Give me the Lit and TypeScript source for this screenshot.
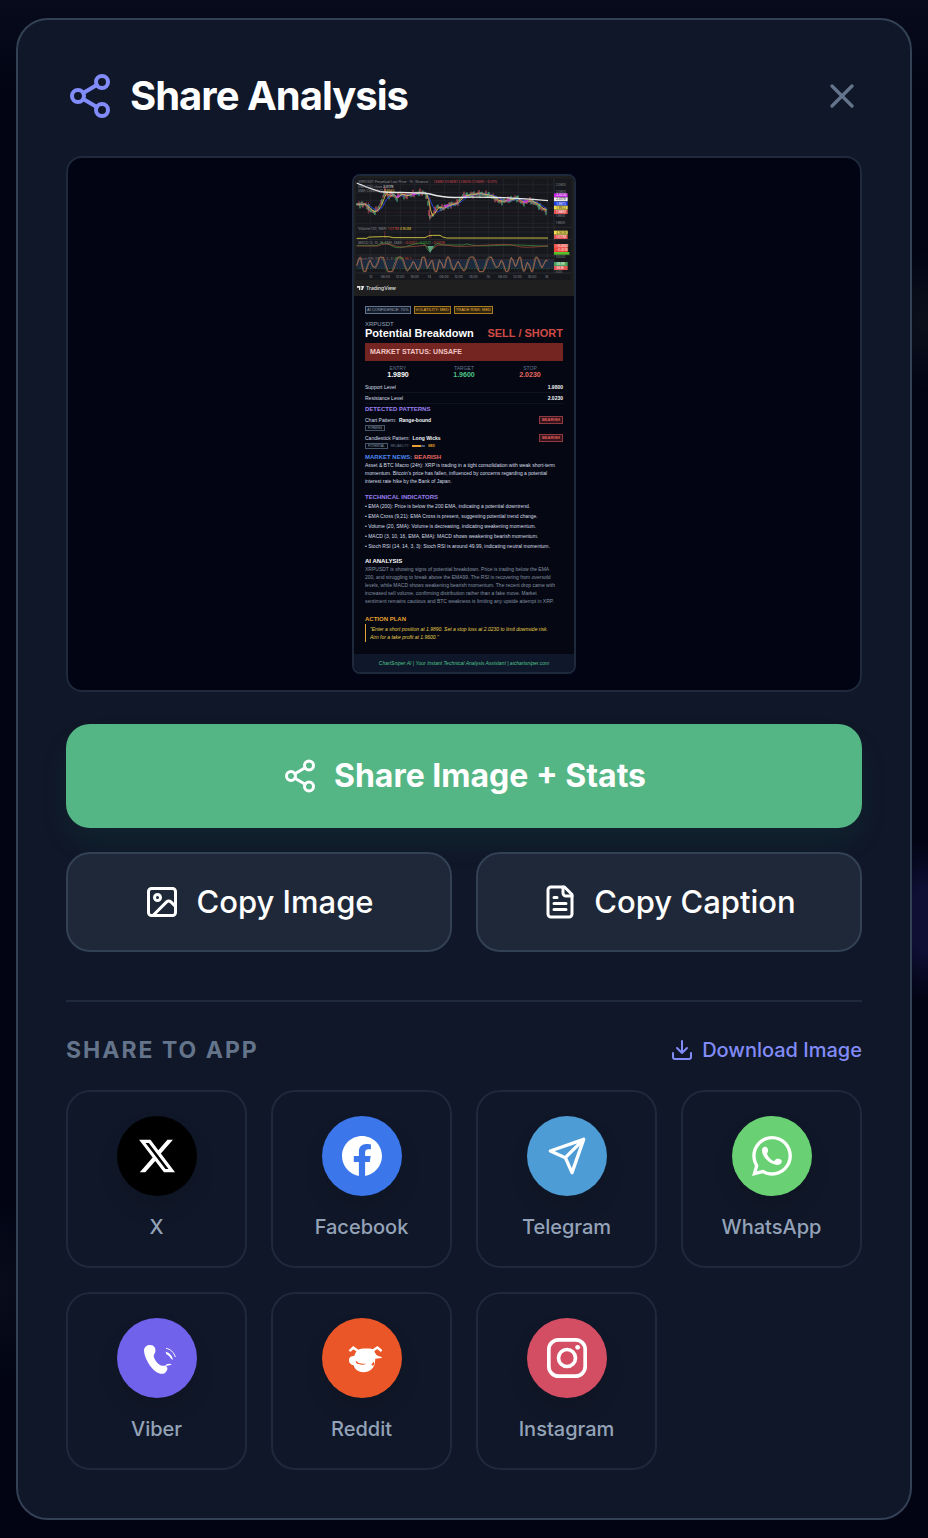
import { LitElement, html, css, svg } from "lit";
import { customElement } from "lit/decorators.js";

type Point = [number, number];

const PRICE: Point[] = [
  [20, 97], [45, 97], [55, 108], [70, 121], [85, 110], [98, 80], [105, 56], [115, 76], [125, 65],
  [140, 80], [150, 65], [165, 72], [180, 68], [210, 62], [226, 64], [233, 85], [239, 138], [250, 125],
  [262, 103], [275, 110], [300, 98], [320, 94], [338, 72], [365, 68], [385, 65], [410, 68], [430, 74],
  [445, 88], [470, 86], [500, 78], [515, 92], [540, 86], [560, 96], [575, 110], [592, 117],
];

const priceAt = (x: number): number => {
  for (let i = 1; i < PRICE.length; i++) {
    const [x0, y0] = PRICE[i - 1];
    const [x1, y1] = PRICE[i];
    if (x <= x1) return y0 + ((y1 - y0) * (x - x0)) / (x1 - x0);
  }
  return PRICE[PRICE.length - 1][1];
};

const noise = (i: number): number => Math.sin(i * 12.9898) * Math.cos(i * 4.137);

const candles = Array.from({ length: 190 }, (_, i) => {
  const x = 21 + i * 3;
  const y = priceAt(x) + noise(i) * 4;
  return { x, y, half: 3 + Math.abs(noise(i + 7)) * 7, up: noise(i + 3) > 0 };
});

const average = (lag: number): string =>
  Array.from({ length: 96 }, (_, i) => {
    const x = 20 + i * 6;
    let sum = 0;
    for (let k = 0; k < 6; k++) sum += priceAt(Math.max(20, x - (k * lag) / 6));
    return `${x},${(sum / 6).toFixed(1)}`;
  }).join(" ");

const oscillator = (phase: number): string =>
  Array.from({ length: 144 }, (_, i) => {
    const x = 20 + i * 4;
    const v = Math.sin(x / 5.3 + phase + Math.sin(x / 41) * 3) * 0.8 + Math.sin(x / 11 + phase) * 0.5 + noise(i) * 0.15;
    return `${x},${(277 - Math.max(-1, Math.min(1, v)) * 22).toFixed(1)}`;
  }).join(" ");

@customElement("price-chart")
class PriceChart extends LitElement {
  static styles = css`
    :host { display: block; }
    svg { display: block; width: 100%; height: auto; font-family: Inter, sans-serif; }
  `;

  tag(y: number, fill: string, label: string, dark = false) {
    return svg`<rect x="612" y=${y} width="41" height="12" fill=${fill}/>
      <text x="619" y=${y + 9} font-size="9" fill=${dark ? "#222" : "#fff"}>${label}</text>`;
  }

  render() {
    return html`<svg viewBox="12 12 660 360" role="img" aria-label="XRPUSDT price chart">
      <rect x="12" y="12" width="660" height="360" fill="#1f1f1f"/>
      <rect x="18" y="20" width="646" height="304" fill="#17181d"/>
      <g stroke="#2c2e34" stroke-width="1.5">
        ${[62, 106, 151, 195, 240, 284, 328, 372, 416, 460, 505, 549, 593].map((x) => svg`<line x1=${x} x2=${x} y1="20" y2="303"/>`)}
        ${[38, 62, 86, 108, 131, 154, 180, 216, 254].map((y) => svg`<line x1="20" x2="612" y1=${y} y2=${y}/>`)}
      </g>
      <g stroke="#3a3c42" stroke-width="1.5">
        <line x1="20" x2="664" y1="166" y2="166"/><line x1="20" x2="664" y1="203" y2="203"/>
        <line x1="20" x2="664" y1="249" y2="249"/><line x1="20" x2="664" y1="303" y2="303"/>
        <line x1="612" x2="612" y1="20" y2="303"/>
      </g>
      <line x1="20" x2="612" y1="121" y2="121" stroke="#7d2f3b" stroke-dasharray="3 3"/>
      <path d="M239 76V145M105 42V70M55 90V125" stroke="#b04a56" stroke-width="2"/>
      <g stroke-width="3">
        ${candles.map((c) => svg`<line x1=${c.x} x2=${c.x} y1=${c.y - c.half} y2=${c.y + c.half} stroke=${c.up ? "#5cc090" : "#dc5c68"}/>`)}
      </g>
      <polyline points=${average(30)} fill="none" stroke="#2747d9" stroke-width="3"/>
      <polyline points=${average(12)} fill="none" stroke="#e6c94a" stroke-width="2.5"/>
      <path d="M140 76l8-6M186 67l12-2M282 104l14-5M340 76l8-5M472 86l8-3M520 90l14-3" stroke="#c13bd0" stroke-width="6"/>
      <path d="M20 33C45 43 60 50 84 57S150 60 180 62S220 60 240 66S290 78 330 76S420 76 460 77S550 82 594 86" fill="none" stroke="#e6e6e6" stroke-width="4"/>
      <g font-size="10">
        <text x="25" y="34" fill="#8b8d93">XRPUSDT Perpetual Last Price · 15 · Binance</text>
        <text x="250" y="34" fill="#d04a56">1.9892 H1.9897 L1.9876 C1.9890 −0.01%</text>
        <text x="25" y="47" fill="#8b8d93">EMA 200 close <tspan fill="#e6e6e6">2.0179</tspan></text>
        <text x="25" y="59" fill="#8b8d93">EMA Cross 9 21 <tspan fill="#d6b944">1.9933</tspan></text>
        <text x="25" y="175" fill="#8b8d93">Volume (20, SMA) <tspan fill="#d6483c">1.077M</tspan> <tspan fill="#e6cf3c">4.163M</tspan></text>
        <text x="25" y="216" fill="#8b8d93">MACD (3, 10, 16, EMA, EMA) <tspan fill="#d6483c">−0.0002</tspan> <tspan fill="#3fae3f">−0.0021</tspan> <tspan fill="#d6483c">−0.0019</tspan></text>
        <text x="25" y="263" fill="#8b8d93">Stoch RSI (14, 14, 3, 3) <tspan fill="#3fae3f">49.99</tspan> <tspan fill="#d6483c">46.2</tspan></text>
      </g>
      <path d="M104 178V198M239 176V198M243 188V198" stroke="#7d2f3b" stroke-width="2"/>
      <path d="M20 199H50Q55 194 64 195L100 194Q120 193 130 197H225Q236 189 248 190H270Q276 196 290 198H594" fill="none" stroke="#c9bb3f" stroke-width="3"/>
      <path d="M20 221H80Q96 210 106 213T130 224T180 220T225 218L232 232L240 240L250 226L258 216Q266 212 276 219H340Q350 213 362 218T430 221T500 219T594 223" fill="none" stroke="#3f9c3f" stroke-width="2"/>
      <path d="M20 222H85Q100 214 112 216T140 223T225 220L236 226L248 231L262 220Q280 216 300 221T400 220T500 222T594 221" fill="none" stroke="#b0503c" stroke-width="2"/>
      <path d="M232 222H252L240 243Z" fill="#5aa07c"/>
      <rect x="20" y="262" width="592" height="28" fill="#1d2a3d"/>
      <path d="M20 262H612" stroke="#8a3c3c" stroke-width="1.5" stroke-dasharray="4 4"/>
      <path d="M20 290H612" stroke="#3f7c3f" stroke-width="1.5" stroke-dasharray="4 4"/>
      <polyline points=${oscillator(0.4)} fill="none" stroke="#68805c" stroke-width="2"/>
      <polyline points=${oscillator(0)} fill="none" stroke="#b3604a" stroke-width="2.5"/>
      <g font-size="9" fill="#8b8d93">
        <text x="617" y="41">2.0800</text><text x="617" y="62">2.0600</text>
        <text x="617" y="134">1.9800</text><text x="617" y="157">1.9600</text><text x="617" y="258">100.00</text>
        <text x="617" y="302">0.00</text>
      </g>
      ${this.tag(64, "#c32be0", "2.0230")}${this.tag(76, "#ececec", "2.0179", true)}
      ${this.tag(89, "#1c3ff0", "1.9973")}${this.tag(101, "#f0dc50", "1.9933", true)}${this.tag(114, "#e25555", "1.9890")}
      ${this.tag(176, "#f0dc50", "4.163M", true)}${this.tag(189, "#e25555", "1.077M")}
      ${this.tag(216, "#ee5a50", "−0.0002")}${this.tag(228, "#ee4438", "−0.0019")}
      <rect x="612" y="240" width="46" height="8" fill="#58c22e"/>
      ${this.tag(270, "#4aa35c", "49.99")}${this.tag(282, "#e25555", "46.18")}
      <g font-size="10" fill="#8b8d93" text-anchor="middle">
        ${["13", "06:00", "12:00", "18:00", "14", "06:00", "12:00", "18:00", "15", "06:00", "12:00", "18:00", "16"].map(
          (t, i) => svg`<text x=${62 + i * 44} y="318">${t}</text>`
        )}
      </g>
      <path d="M21 342H31V354H27V347H21ZM36 342H43L38 354H33Z" fill="#e4e4e4"/><circle cx="34" cy="344" r="2" fill="#e4e4e4"/>
      <text x="48" y="354" font-size="15" font-weight="500" fill="#e4e4e4">TradingView</text>
    </svg>`;
  }
}

@customElement("report-preview")
class ReportPreview extends LitElement {
  static styles = css`
    :host {
      display: block; box-sizing: border-box; width: 224px;
      border: 2px solid #1e293b; border-radius: 8px; overflow: hidden;
      background: #050812; color: #d5dde8;
      font: 5px/8px "Liberation Sans", Arial, sans-serif; white-space: nowrap;
    }
    p, h3, h4, ul, dl, dd, blockquote { margin: 0; padding: 0; }
    .body { padding: 10px 11px 12px; }
    .badges { display: flex; gap: 3px; margin-bottom: 7px; }
    .badge { border: 1px solid #64748b; color: #94a3b8; font-size: 4px; line-height: 6px; padding: 0 1px; background: #141c2b; }
    .badge.amber { border-color: #a97b22; color: #eab03a; background: #30240f; }
    .badge.red { border-color: #8f3a40; color: #e05c5c; background: #35151b; font-weight: bold; padding: 0 2px; }
    .symbol { font-size: 6px; line-height: 6px; color: #94a3b8; }
    .title { display: flex; justify-content: space-between; font-size: 11px; line-height: 12px; color: #fff; font-weight: bold; }
    .signal { color: #d14b45; }
    .status { margin-top: 4px; padding: 5px; background: #742522; color: #f3c6c4; font-size: 7px; line-height: 8px; font-weight: bold; }
    .stats { display: grid; grid-template-columns: repeat(3, 1fr); text-align: center; margin: 4px 0 3px; }
    .stats dt { color: #64748b; line-height: 6px; }
    .stats dd { font-size: 7px; line-height: 8px; font-weight: bold; color: #fff; }
    .stats .green { color: #4fc48a; }
    .stats .coral { color: #e86a64; }
    .row { display: flex; justify-content: space-between; align-items: center; }
    .level { line-height: 10px; border-bottom: 1px solid #0d1420; }
    b { color: #f1f5f9; }
    h4 { font-size: 6px; line-height: 8px; }
    .violet { color: #9b7ff0; }
    .blue { color: #4b86f0; }
    .red-text { color: #e86a64; }
    .orange { color: #e8a030; }
    .white { color: #fff; }
    .patterns { margin-top: 1px; }
    .pattern { margin-top: 3px; }
    .tags { display: flex; align-items: center; gap: 3px; line-height: 6px; font-size: 3px; color: #64748b; margin-top: 1px; }
    .tags .tag { border: 1px solid #475569; color: #94a3b8; padding: 0 2px; line-height: 4px; }
    .meter { display: inline-block; width: 13px; height: 2px; background: linear-gradient(90deg, #e8a030 70%, #475569 70%); }
    .news { margin-top: 4px; }
    .section { margin-top: 8px; }
    .list { list-style: none; line-height: 10px; }
    .muted { color: #8490a2; }
    .analysis { margin-top: 6px; }
    .plan { margin-top: 10px; }
    blockquote { margin-top: 1px; border-left: 1px solid #e8a030; padding: 1px 0 1px 4px; color: #e8cf4c; font-style: italic; }
    .footer { background: #0f172a; color: #4fc48a; text-align: center; font-style: italic; line-height: 18px; }
  `;

  render() {
    return html`
      <price-chart></price-chart>
      <div class="body">
        <div class="badges">
          <span class="badge">AI CONFIDENCE: 70%</span>
          <span class="badge amber">VOLATILITY: MED</span>
          <span class="badge amber">TRADE RISK: MED</span>
        </div>
        <p class="symbol">XRPUSDT</p>
        <h3 class="title"><span>Potential Breakdown</span><span class="signal">SELL / SHORT</span></h3>
        <p class="status">MARKET STATUS: UNSAFE</p>
        <dl class="stats">
          <div><dt>ENTRY</dt><dd>1.9890</dd></div>
          <div><dt>TARGET</dt><dd class="green">1.9600</dd></div>
          <div><dt>STOP</dt><dd class="coral">2.0230</dd></div>
        </dl>
        <p class="row level"><span>Support Level</span><b>1.9800</b></p>
        <p class="row level"><span>Resistance Level</span><b>2.0230</b></p>
        <h4 class="violet patterns">DETECTED PATTERNS</h4>
        <p class="row pattern"><span>Chart Pattern: &nbsp;<b>Range-bound</b></span><span class="badge red">BEARISH</span></p>
        <p class="tags"><span class="tag">FORMING</span></p>
        <p class="row pattern"><span>Candlestick Pattern: &nbsp;<b>Long Wicks</b></span><span class="badge red">BEARISH</span></p>
        <p class="tags"><span class="tag">POTENTIAL</span><span>RELIABILITY:</span><span class="meter"></span><b class="orange">MED</b></p>
        <h4 class="blue news">MARKET NEWS: <span class="red-text">BEARISH</span></h4>
        <p>Asset &amp; BTC Macro (24h): XRP is trading in a tight consolidation with weak short-term<br />momentum. Bitcoin's price has fallen, influenced by concerns regarding a potential<br />interest rate hike by the Bank of Japan.</p>
        <h4 class="violet section">TECHNICAL INDICATORS</h4>
        <ul class="list">
          <li>• EMA (200): Price is below the 200 EMA, indicating a potential downtrend.</li>
          <li>• EMA Cross (9,21): EMA Cross is present, suggesting potential trend change.</li>
          <li>• Volume (20, SMA): Volume is decreasing, indicating weakening momentum.</li>
          <li>• MACD (3, 10, 16, EMA, EMA): MACD shows weakening bearish momentum.</li>
          <li>• Stoch RSI (14, 14, 3, 3): Stoch RSI is around 49.99, indicating neutral momentum.</li>
        </ul>
        <h4 class="white analysis">AI ANALYSIS</h4>
        <p class="muted">XRPUSDT is showing signs of potential breakdown. Price is trading below the EMA<br />200, and struggling to break above the EMA99. The RSI is recovering from oversold<br />levels, while MACD shows weakening bearish momentum. The recent drop came with<br />increased sell volume, confirming distribution rather than a fake move. Market<br />sentiment remains cautious and BTC weakness is limiting any upside attempt in XRP.</p>
        <h4 class="orange plan">ACTION PLAN</h4>
        <blockquote>"Enter a short position at 1.9890. Set a stop loss at 2.0230 to limit downside risk.<br />Aim for a take profit at 1.9600."</blockquote>
      </div>
      <p class="footer">ChartSniper AI | Your Instant Technical Analysis Assistant | aichartsniper.com</p>
    `;
  }
}

const stroked = (content: unknown) => html`<svg class="icon" viewBox="0 0 24 24" fill="none" stroke="currentColor" stroke-width="2" stroke-linecap="round" stroke-linejoin="round" aria-hidden="true">${content}</svg>`;
const filled = (content: unknown) => html`<svg class="icon" viewBox="0 0 24 24" fill="currentColor" aria-hidden="true">${content}</svg>`;

const shareIcon = stroked(svg`<circle cx="18" cy="5" r="3"/><circle cx="6" cy="12" r="3"/><circle cx="18" cy="19" r="3"/><path d="M8.59 13.51 15.42 17.49M15.41 6.51 8.59 10.49"/>`);
const closeIcon = stroked(svg`<path d="M18 6 6 18M6 6l12 12"/>`);
const imageIcon = stroked(svg`<rect x="3" y="3" width="18" height="18" rx="2"/><circle cx="9" cy="9" r="2"/><path d="m21 15-3.086-3.086a2 2 0 0 0-2.828 0L6 21"/>`);
const fileIcon = stroked(svg`<path d="M15 2H6a2 2 0 0 0-2 2v16a2 2 0 0 0 2 2h12a2 2 0 0 0 2-2V7Z"/><path d="M14 2v4a2 2 0 0 0 2 2h4M10 9H8M16 13H8M16 17H8"/>`);
const downloadIcon = stroked(svg`<path d="M21 15v4a2 2 0 0 1-2 2H5a2 2 0 0 1-2-2v-4M7 10l5 5 5-5M12 15V3"/>`);

const APPS = [
  { name: "X", tone: "x", icon: filled(svg`<path d="M18.244 2.25h3.308l-7.227 8.26 8.502 11.24H16.17l-5.214-6.817L4.99 21.75H1.68l7.73-8.835L1.254 2.25H8.08l4.713 6.231zm-1.161 17.52h1.833L7.084 4.126H5.117z"/>`) },
  { name: "Facebook", tone: "facebook", icon: filled(svg`<path d="M24 12.073c0-6.627-5.373-12-12-12s-12 5.373-12 12c0 5.99 4.388 10.954 10.125 11.854v-8.385H7.078v-3.47h3.047V9.43c0-3.007 1.792-4.669 4.533-4.669 1.312 0 2.686.235 2.686.235v2.953H15.83c-1.491 0-1.956.925-1.956 1.874v2.25h3.328l-.532 3.47h-2.796v8.385C19.612 23.027 24 18.062 24 12.073z"/>`) },
  { name: "Telegram", tone: "telegram", icon: stroked(svg`<path d="m22 2-7 20-4-9-9-4ZM22 2 11 13"/>`) },
  { name: "WhatsApp", tone: "whatsapp", icon: filled(svg`<path d="M.057 24l1.687-6.163c-1.041-1.804-1.588-3.849-1.587-5.946.003-6.556 5.338-11.891 11.893-11.891 3.181.001 6.167 1.24 8.413 3.488 2.245 2.248 3.481 5.236 3.48 8.414-.003 6.557-5.338 11.892-11.893 11.892-1.99-.001-3.951-.5-5.688-1.448l-6.305 1.654zm6.597-3.807c1.676.995 3.276 1.591 5.392 1.592 5.448 0 9.886-4.434 9.889-9.885.002-5.462-4.415-9.89-9.881-9.892-5.452 0-9.887 4.434-9.889 9.884-.001 2.225.651 3.891 1.746 5.634l-.999 3.648 3.742-.981z"/><path d="M6 8.6C6 7.2 7 6.4 8 6.5C9.2 6.6 9.8 8 9.6 9.2C9.5 10 8.9 10.2 9.1 10.9C9.8 12.7 11.3 14.3 13 15C13.7 15.2 14 14 14.9 13.7C16.2 13.3 17.9 13.9 17.9 15.2C17.9 16.6 16.4 17.5 14.9 17.4C10.5 17 6 12.6 6 8.6Z"/>`) },
  { name: "Viber", tone: "viber", icon: filled(svg`<path d="M4.2 7.5C4.2 5.4 6 4.2 8 4.2C10.2 4.2 11.4 6 11 8.2C10.8 9.4 10 9.8 10 10.8C10.4 13 12 15.2 14 16.4C15.2 17 16.4 16.2 17.6 17C18.8 18 18.2 19.6 17 20.8C15.6 22 13.4 21.6 11.6 20.4C8 18 4.4 12 4.2 7.5Z"/><path d="M16.8 16.8C17.6 15.4 19.4 15.2 21 15.8C19.6 16.4 18.2 16.8 16.8 16.8ZM17.2 8.2C19.6 8.8 21.2 10.6 21.6 13.2L20.2 12.2C19.8 11 18.8 10.4 17.6 9.8Z"/><path d="M17.4 6.2C20 6.6 22.2 8.6 23 11.4" fill="none" stroke="currentColor" stroke-width=".6"/>`) },
  { name: "Reddit", tone: "reddit", icon: filled(svg`<path fill-rule="evenodd" d="M9.6 7.2C11 6.2 18 6 19.2 7.2C19.6 9 20.6 10.2 21.4 10.7L24 11.5L23.8 12L20 12.4C19.8 13 20 13.6 19.8 14.4C19.6 18 16.8 20.5 12.8 20.5C9.4 20.4 7.4 18.6 7 16.4C4.8 16 4 14.4 4.2 12.8C4.5 11.1 6 10.6 7.4 10.8C7.6 9.4 8.4 8.2 9.6 7.2ZM8.3 13.8C8.3 15 8.8 15.5 9.9 15.6C11.4 16.1 13.2 16.2 14.5 15.4C13 15.5 10.8 15.3 9.8 14.8C9.4 14.4 9 14 8.3 13.8ZM17.6 16.2C18 15 18.6 15.4 18.5 14.2C19.8 14.6 19.5 16.2 18.6 16.6Z"/><path d="M4.5 7.9 6.8 5.8 9.8 8M18.4 7.6 21.2 5.7 23.8 7.9" fill="none" stroke="currentColor" stroke-width="1.5"/>`) },
  { name: "Instagram", tone: "instagram", icon: filled(svg`<rect x="1.1" y="1.1" width="21.8" height="21.8" rx="5.8" fill="none" stroke="currentColor" stroke-width="2.2"/><circle cx="12" cy="12" r="5.1" fill="none" stroke="currentColor" stroke-width="2.2"/><circle cx="18.4" cy="5.6" r="1.44"/>`) },
];

@customElement("app-root")
class AppRoot extends LitElement {
  static styles = css`
    :host {
      display: block; box-sizing: border-box; min-height: 100vh; padding: 18px 16px;
      background:
        radial-gradient(ellipse 50px 80px at 100% 920px, #0f0e33 40%, transparent 100%),
        radial-gradient(ellipse 80px 70px at 100% 320px, #0c101b, transparent 100%),
        radial-gradient(ellipse 60px 90px at 0 1290px, #080d1b, transparent 100%),
        linear-gradient(#080b1b, #020414 90px);
      color: #fff; font-family: Inter, sans-serif;
    }
    *, *::before { box-sizing: border-box; }
    button { font: inherit; color: inherit; margin: 0; cursor: pointer; }
    h1, h2 { margin: 0; }
    .icon { display: block; width: 36px; height: 36px; flex: none; }
    .dialog { border: 2px solid #334155; border-radius: 32px; padding: 48px; background: #101728; }
    .header { display: flex; align-items: center; gap: 16px; margin-bottom: 32px; }
    .brand { color: #818cf8; }
    .brand .icon { width: 48px; height: 48px; }
    .header h1 { flex: 1; font-size: 40px; line-height: 56px; font-weight: 700; letter-spacing: -1px; }
    .close { border: 0; background: none; padding: 0; color: #64748b; }
    .close .icon { width: 40px; height: 40px; }
    .preview { display: flex; justify-content: center; padding: 16px; border: 2px solid #1e293b; border-radius: 16px; background: #020413; }
    .action { display: flex; align-items: center; justify-content: center; gap: 16px; width: 100%; border-radius: 24px; line-height: 48px; }
    .primary { margin: 32px 0 24px; padding: 28px; border: 0; background: #55b685; font-size: 32px; font-weight: 700; box-shadow: 0 16px 32px -4px #10b98118; }
    .pair { display: grid; grid-template-columns: 1fr 1fr; gap: 24px; }
    .secondary { padding: 24px; border: 2px solid #334155; background: #1f2838; font-size: 31px; font-weight: 500; }
    .share { margin-top: 48px; border-top: 2px solid #1e293b; padding-top: 32px; }
    .share-head { display: flex; align-items: center; justify-content: space-between; margin-bottom: 24px; }
    h2 { font-size: 23px; line-height: 32px; font-weight: 700; letter-spacing: 2px; color: #64748b; }
    .download { display: flex; align-items: center; gap: 8px; border: 0; background: none; padding: 0; color: #818cf8; font-size: 20px; line-height: 32px; font-weight: 500; }
    .download .icon { width: 24px; height: 24px; }
    .apps { display: grid; grid-template-columns: repeat(4, 1fr); gap: 24px; }
    .app { display: flex; flex-direction: column; align-items: center; gap: 16px; padding: 24px 8px; border: 2px solid #1e293b; border-radius: 24px; background: none; color: #94a3b8; font-size: 20px; line-height: 30px; font-weight: 500; }
    .disc { display: grid; place-items: center; width: 80px; height: 80px; border-radius: 50%; color: #fff; box-shadow: 0 12px 24px -4px #0002; }
    .disc .icon { width: 40px; height: 40px; }
    .x { background: #000; }
    .facebook { background: #3b77ea; }
    .telegram { background: #4d9cd5; }
    .whatsapp { background: #69d173; }
    .viber { background: #7062ea; }
    .reddit { background: #ea5628; }
    .instagram { background: #d44e63; }
  `;

  render() {
    return html`
      <main class="dialog" role="dialog" aria-labelledby="title">
        <header class="header">
          <span class="brand">${shareIcon}</span>
          <h1 id="title">Share Analysis</h1>
          <button class="close" aria-label="Close">${closeIcon}</button>
        </header>
        <div class="preview"><report-preview></report-preview></div>
        <button class="action primary">${shareIcon}<span>Share Image + Stats</span></button>
        <div class="pair">
          <button class="action secondary">${imageIcon}<span>Copy Image</span></button>
          <button class="action secondary">${fileIcon}<span>Copy Caption</span></button>
        </div>
        <section class="share">
          <div class="share-head">
            <h2>SHARE TO APP</h2>
            <button class="download">${downloadIcon}<span>Download Image</span></button>
          </div>
          <div class="apps">
            ${APPS.map((a) => html`<button class="app"><span class="disc ${a.tone}">${a.icon}</span><span>${a.name}</span></button>`)}
          </div>
        </section>
      </main>
    `;
  }
}
